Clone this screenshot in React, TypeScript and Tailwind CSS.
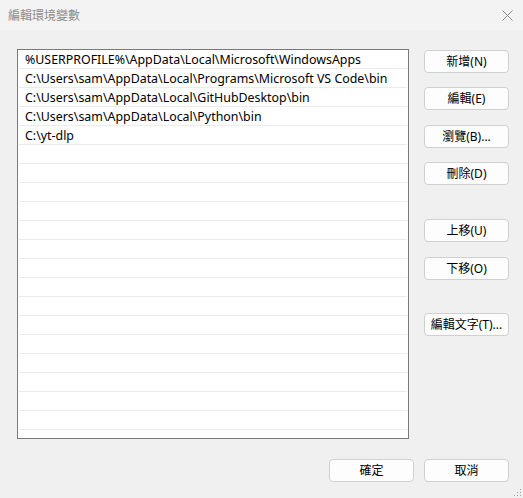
import React from 'react';

const paths = [
  '%USERPROFILE%\\AppData\\Local\\Microsoft\\WindowsApps',
  'C:\\Users\\sam\\AppData\\Local\\Programs\\Microsoft VS Code\\bin',
  'C:\\Users\\sam\\AppData\\Local\\GitHubDesktop\\bin',
  'C:\\Users\\sam\\AppData\\Local\\Python\\bin',
  'C:\\yt-dlp',
];

const font = { fontFamily: '"Noto Sans", "Noto Sans CJK TC", sans-serif' };

function Btn({ label, className = '' }: { label: string; className?: string }) {
  return (
    <button
      className={`h-[23px] w-[85px] rounded-[4px] border border-[#d0d0d0] bg-[#fdfdfd] text-[12px] leading-none text-black ${className}`}
    >
      {label}
    </button>
  );
}

export default function App() {
  const rows = Array.from({ length: 21 }, (_, i) => paths[i] ?? '');

  return (
    <div className="relative h-[498px] w-[523px] overflow-hidden bg-[#f0f0f0]" style={font}>
      {/* Title bar */}
      <div className="flex h-[30px] items-center justify-between bg-[#f3f3f3] pl-[8px] pr-[10px]">
        <span className="text-[12px] text-[#8c8c8c]" style={{ fontFamily: '"Noto Sans CJK TC", sans-serif' }}>
          編輯環境變數
        </span>
        <svg width="11" height="11" viewBox="0 0 11 11">
          <path d="M0.5 0.5 L10.5 10.5 M10.5 0.5 L0.5 10.5" stroke="#8a8a8a" strokeWidth="1" />
        </svg>
      </div>

      {/* Body */}
      <div className="flex pl-[17px] pt-[19px]">
        <div className="h-[390px] w-[392px] overflow-hidden border border-[#7a7a7a] bg-white px-px">
          {rows.map((p, i) => (
            <div
              key={i}
              className="h-[19px] border-b border-[#ebebeb] pl-[6px] text-[12.4px] leading-[19px] text-black whitespace-nowrap"
            >
              {p}
            </div>
          ))}
        </div>

        <div className="ml-[15px] flex flex-col pt-px">
          <Btn label="新增(N)" />
          <Btn label="編輯(E)" className="mt-[14px]" />
          <Btn label="瀏覽(B)..." className="mt-[15px]" />
          <Btn label="刪除(D)" className="mt-[14px]" />
          <Btn label="上移(U)" className="mt-[34px]" />
          <Btn label="下移(O)" className="mt-[15px]" />
          <Btn label="編輯文字(T)..." className="mt-[33px]" />
        </div>
      </div>

      {/* Footer */}
      <div className="mt-[20px] flex justify-end gap-[10px] pr-[14px]">
        <Btn label="確定" />
        <Btn label="取消" />
      </div>

      {/* Resize grip */}
      <svg width="8" height="8" viewBox="0 0 8 8" className="absolute bottom-[1px] right-[1px]">
        <rect x="6" y="0" width="1" height="1" fill="#a0a0a0" />
        <rect x="3" y="3" width="1" height="1" fill="#a0a0a0" />
        <rect x="6" y="3" width="1" height="1" fill="#a0a0a0" />
        <rect x="0" y="6" width="1" height="1" fill="#a0a0a0" />
        <rect x="3" y="6" width="1" height="1" fill="#a0a0a0" />
        <rect x="6" y="6" width="1" height="1" fill="#a0a0a0" />
      </svg>
    </div>
  );
}
